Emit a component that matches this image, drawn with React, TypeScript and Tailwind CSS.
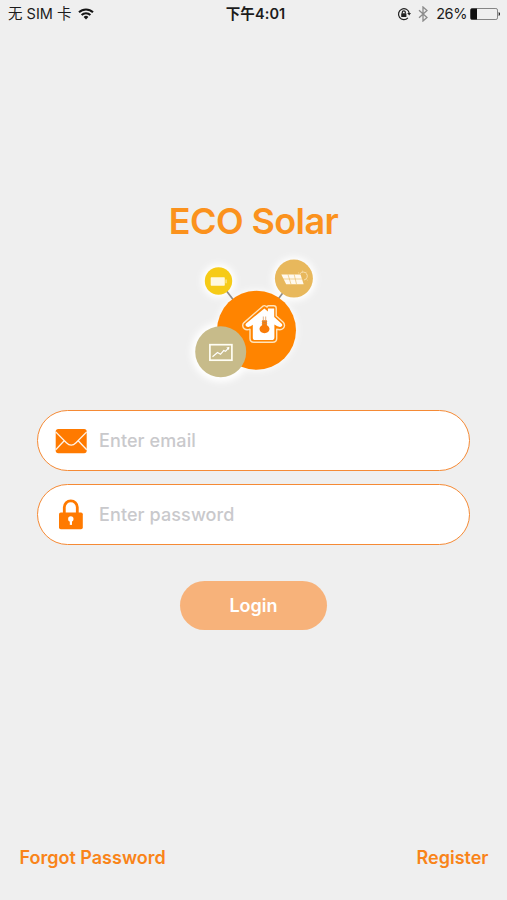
import React, { useState } from 'react';

const StatusBar: React.FC = () => (
  <header className="flex h-7 items-center pl-2 pr-[6px] font-['Inter','Noto_Sans_CJK_SC',sans-serif] text-[14.5px] leading-none text-[#1c1c1c]">
    <div className="flex flex-1 items-center gap-[7px]">
      <span className="whitespace-pre">无 SIM 卡</span>
      <svg width="16" height="12" viewBox="0 0 16 12" fill="none" stroke="#151515" strokeWidth="2">
        <path d="M1 4.3a10 10 0 0 1 14 0" />
        <path d="M3.6 7a6.3 6.3 0 0 1 8.8 0" />
        <path d="M8 11.4 5.6 9a3.4 3.4 0 0 1 4.8 0Z" fill="#151515" stroke="none" />
      </svg>
    </div>
    <span className="pl-[2px] font-semibold tracking-[0.1px]">下午4:01</span>
    <div className="flex flex-1 items-center justify-end">
      <svg width="14" height="14" viewBox="0 0 14 14" fill="none" stroke="#222" strokeWidth="1.2">
        <path d="M10.9 10.8A5.4 5.4 0 1 1 12.2 6" />
        <path d="m10.2 6 2 2.5 1.8-2.5Z" fill="#222" stroke="none" />
        <rect x="4.2" y="6.3" width="5.2" height="3.8" rx=".4" fill="#222" stroke="none" />
        <path d="M5.3 6.5V5.3a1.5 1.5 0 0 1 3 0v1.2" />
      </svg>
      <svg className="ml-[7px]" width="10" height="16" viewBox="0 0 10 16" fill="none" stroke="#8b8b8b" strokeWidth="1.3">
        <path d="m1 4.2 8 7.3L5 15V1l4 3.5-8 7.3" />
      </svg>
      <span className="ml-[8px] tracking-[-0.4px]">26%</span>
      <svg className="ml-[3px]" width="31" height="12" viewBox="0 0 31 12">
        <rect x=".5" y=".5" width="27" height="11" rx="1.6" fill="none" stroke="#858585" />
        <path d="M1.8.5H7v11H1.8Q.5 11.5.5 10V2Q.5.5 1.8.5Z" fill="#111" />
        <path d="M28.7 4a2.2 2.2 0 0 1 0 4Z" fill="#111" />
      </svg>
    </div>
  </header>
);

const Logo: React.FC = () => (
  <svg width="140" height="140" viewBox="0 0 140 140" fill="none">
    <defs>
      <filter id="halo" x="-30%" y="-30%" width="160%" height="160%">
        <feGaussianBlur stdDeviation="3" />
      </filter>
    </defs>
    <g fill="#fff" filter="url(#halo)">
      <circle cx="33.5" cy="31" r="17" />
      <circle cx="109" cy="29" r="22" />
      <circle cx="36" cy="102" r="30" />
      <circle cx="71.5" cy="80.5" r="41" opacity=".8" />
    </g>

    <path d="m40 39 10 13M100 40l-9 12" stroke="#8f8b88" strokeWidth="1.7" />
    <circle cx="71.5" cy="80.3" r="39.5" fill="#ff8400" />

    {/* battery */}
    <circle cx="33.5" cy="31" r="13.7" fill="#f6cb17" />
    <rect x="25.7" y="27.3" width="14.1" height="8.4" rx=".7" fill="#fff9df" />
    <path d="M40.3 29.5h1.6v3.8h-1.6Z" fill="#fbe37a" />

    {/* solar panel */}
    <circle cx="108.9" cy="28.6" r="19" fill="#e8b85c" />
    <path d="M96.3 24.5h19.2l3.2 9.7h-17.5Z" fill="#fff9ee" />
    <path d="M98 29h19M103 24.5l3 9.7m3.2-9.7 2.3 9.7" stroke="#e8b85c" strokeWidth=".6" />
    <path d="M115 23.8a4 4 0 1 1 4 6.2" stroke="#fff1d5" strokeOpacity=".75" strokeWidth=".9" />
    <path d="m113.3 22.8 1 .5m3-1.6.3-1m3.2 2 .9-.9m-.1 7.6.9.8" stroke="#fff1d5" strokeOpacity=".75" strokeWidth=".8" />

    {/* chart */}
    <circle cx="35.7" cy="101.8" r="25.5" fill="#c7bb8a" />
    <rect x="24.9" y="94.7" width="22" height="15.5" stroke="#fffef4" strokeWidth="1.7" />
    <path d="m27.5 106.7 5-4.2 3 1.8 3.2-3.8 1.8.8 3.4-3.7" stroke="#fff" strokeWidth="1.2" />
    <path d="m41.3 97.5 3.1-.6-.5 3.1Z" fill="#fff" />

    {/* house */}
    <path
      d="M80.9 56.2q-1.5-1.1-3.1 0L59 72.6c-2 1.9-1.5 4.8.5 6.3 1.6 1.2 3.5 1 5.5.3v9.4c0 2.4 1.5 3.7 3.8 3.7h18.9c2.6 0 4-1.3 4-3.7v-9.4c2.5.8 4.9.7 6.6-.9 1.8-1.8 1.5-4.6-.3-6.2L91.2 66v-7.8c0-1.6-.9-2.5-2.5-2.5h-5.2c-.8 0-1.3.6-1.3 1.4Z"
      stroke="#ffe4bc"
      strokeWidth="1.4"
      strokeLinejoin="round"
    />
    <path
      d="m79.4 58.4 3.5 3v-3h6.3v8.5l7.5 6.8c1.4 1.5.1 3.4-1.8 3.2-2.4-.2-3.8-1.2-5.5-2.3v12.7c0 1.9-.8 2.8-2.6 2.8H70.3c-1.7 0-2.5-.9-2.5-2.7V74.8c-1.5 1-2.7 2-4.3 2.1-2.3.2-4-1.8-2.4-3.4Z"
      fill="#fff"
    />
    <path d="M77.1 75.2v-5h4.8v5c1.7 1 2.6 2.2 2.6 3.9 0 2.3-2.1 4.1-5 4.1s-5-1.8-5-4.1c0-1.7.9-2.9 2.6-3.9Z" fill="#f97b08" />
    <path d="M78.3 70.2v-3.7m2.4 3.7v-3.7" stroke="#d99d64" strokeWidth=".8" />
    <path d="M76.8 71.5h5.4m-5.4 2.2h5.4" stroke="#c98b4f" strokeWidth=".8" />
  </svg>
);

const MailIcon: React.FC = () => (
  <svg width="32" height="26" viewBox="0 0 32 26" fill="none">
    <rect x=".7" y="1" width="31" height="24.2" rx="2.6" fill="#ff7a00" />
    <path d="m.7 3.9 10.7 10.8c3.3 3.3 6.3 3.3 9.6 0L31.7 3.9M.7 21.7l8.5-9m14 0 8.5 9" stroke="#fff3e7" strokeWidth="1.3" />
  </svg>
);

const LockIcon: React.FC = () => (
  <svg width="32" height="32" viewBox="0 0 32 32" fill="none">
    <path d="M9.3 15.5V8.3a6.5 6.5 0 0 1 13 0v7.2" stroke="#ff7a00" strokeWidth="2.8" />
    <rect x="4" y="13.5" width="23.8" height="16.8" rx="1.8" fill="#ff7a00" />
    <circle cx="15.8" cy="20" r="2.7" fill="#fff" />
    <path d="M14.8 21.5h2.2v4.4h-2.2Z" fill="#fff" />
  </svg>
);

interface FieldProps {
  type: string;
  placeholder: string;
  icon: React.ReactNode;
  value: string;
  onChange: (value: string) => void;
}

const Field: React.FC<FieldProps> = ({ type, placeholder, icon, value, onChange }) => (
  <label className="flex h-[61px] w-full items-center gap-3 rounded-full border-[1.5px] border-[#f58a35] bg-white pl-[17px] pr-6">
    {icon}
    <input
      type={type}
      placeholder={placeholder}
      value={value}
      onChange={(e) => onChange(e.target.value)}
      className="min-w-0 flex-1 bg-transparent text-[18px] font-medium tracking-[0.1px] text-[#333] outline-none placeholder:text-[#c9c9cc]"
    />
  </label>
);

const App: React.FC = () => {
  const [email, setEmail] = useState('');
  const [password, setPassword] = useState('');

  return (
    <div className="flex h-[900px] w-full flex-col overflow-hidden bg-[#efefef] font-['Inter',sans-serif]">
      <StatusBar />

      <main className="flex flex-1 flex-col items-center px-[37px] pt-[168px]">
        <h1 className="text-[36px] font-semibold leading-[50px] tracking-[-0.6px] text-[#fb921d]">ECO Solar</h1>
        <div className="mt-1 h-[140px] pl-[2px]">
          <Logo />
        </div>

        <form className="mt-5 flex w-full flex-col items-center gap-[13px]" onSubmit={(e) => e.preventDefault()}>
          <Field type="email" placeholder="Enter email" icon={<MailIcon />} value={email} onChange={setEmail} />
          <Field type="password" placeholder="Enter password" icon={<LockIcon />} value={password} onChange={setPassword} />
          <button type="submit" className="mt-[23px] h-[49px] w-[147px] rounded-full bg-[#f7b27a] text-[18px] font-semibold text-white">
            Login
          </button>
        </form>
      </main>

      <footer className="flex items-center justify-between pb-[28px] pl-[19.5px] pr-[18.5px] text-[18px] font-semibold leading-7 text-[#f98419]">
        <button type="button">Forgot Password</button>
        <button type="button">Register</button>
      </footer>
    </div>
  );
};

export default App;
